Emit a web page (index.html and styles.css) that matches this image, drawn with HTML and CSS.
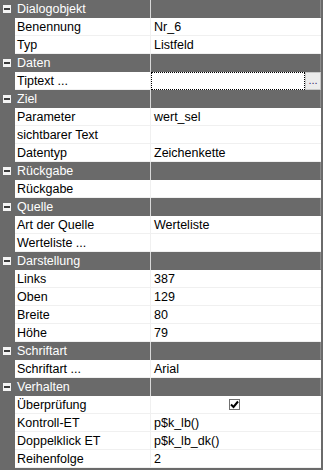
FILE: index.html
```html
<!DOCTYPE html>
<html>
<head>
<meta charset="utf-8">
<link rel="stylesheet" href="styles.css">
</head>
<body>
<div class="grid">
  <div class="row cat"><span class="tg"><i class="box"></i></span><span class="nm">Dialogobjekt</span><span class="dv"></span><span class="vl"></span></div>
  <div class="row"><span class="tg"></span><span class="nm">Benennung</span><span class="dv"></span><span class="vl">Nr_6</span></div>
  <div class="row"><span class="tg"></span><span class="nm">Typ</span><span class="dv"></span><span class="vl">Listfeld</span></div>
  <div class="row cat"><span class="tg"><i class="box"></i></span><span class="nm">Daten</span><span class="dv"></span><span class="vl"></span></div>
  <div class="row"><span class="tg"></span><span class="nm">Tiptext ...</span><span class="dv"></span><span class="vl edit"><span class="field"></span><span class="btn">...</span></span></div>
  <div class="row cat"><span class="tg"><i class="box"></i></span><span class="nm">Ziel</span><span class="dv"></span><span class="vl"></span></div>
  <div class="row"><span class="tg"></span><span class="nm">Parameter</span><span class="dv"></span><span class="vl">wert_sel</span></div>
  <div class="row"><span class="tg"></span><span class="nm">sichtbarer Text</span><span class="dv"></span><span class="vl"></span></div>
  <div class="row"><span class="tg"></span><span class="nm">Datentyp</span><span class="dv"></span><span class="vl">Zeichenkette</span></div>
  <div class="row cat"><span class="tg"><i class="box"></i></span><span class="nm">Rückgabe</span><span class="dv"></span><span class="vl"></span></div>
  <div class="row"><span class="tg"></span><span class="nm">Rückgabe</span><span class="dv"></span><span class="vl"></span></div>
  <div class="row cat"><span class="tg"><i class="box"></i></span><span class="nm">Quelle</span><span class="dv"></span><span class="vl"></span></div>
  <div class="row"><span class="tg"></span><span class="nm">Art der Quelle</span><span class="dv"></span><span class="vl">Werteliste</span></div>
  <div class="row"><span class="tg"></span><span class="nm">Werteliste ...</span><span class="dv"></span><span class="vl"></span></div>
  <div class="row cat"><span class="tg"><i class="box"></i></span><span class="nm">Darstellung</span><span class="dv"></span><span class="vl"></span></div>
  <div class="row"><span class="tg"></span><span class="nm">Links</span><span class="dv"></span><span class="vl">387</span></div>
  <div class="row"><span class="tg"></span><span class="nm">Oben</span><span class="dv"></span><span class="vl">129</span></div>
  <div class="row"><span class="tg"></span><span class="nm">Breite</span><span class="dv"></span><span class="vl">80</span></div>
  <div class="row"><span class="tg"></span><span class="nm">Höhe</span><span class="dv"></span><span class="vl">79</span></div>
  <div class="row cat"><span class="tg"><i class="box"></i></span><span class="nm">Schriftart</span><span class="dv"></span><span class="vl"></span></div>
  <div class="row"><span class="tg"></span><span class="nm">Schriftart ...</span><span class="dv"></span><span class="vl">Arial</span></div>
  <div class="row cat"><span class="tg"><i class="box"></i></span><span class="nm">Verhalten</span><span class="dv"></span><span class="vl"></span></div>
  <div class="row"><span class="tg"></span><span class="nm">Überprüfung</span><span class="dv"></span><span class="vl center"><span class="chk"><svg width="9" height="9" viewBox="0 0 9 9"><path d="M1 4.5 L3.5 7 L8 1.5" fill="none" stroke="#000" stroke-width="2"/></svg></span></span></div>
  <div class="row"><span class="tg"></span><span class="nm">Kontroll-ET</span><span class="dv"></span><span class="vl">p$k_lb()</span></div>
  <div class="row"><span class="tg"></span><span class="nm">Doppelklick ET</span><span class="dv"></span><span class="vl">p$k_lb_dk()</span></div>
  <div class="row"><span class="tg"></span><span class="nm">Reihenfolge</span><span class="dv"></span><span class="vl">2</span></div>
</div>
</body>
</html>
```
FILE: styles.css
```css
html, body {
  margin: 0;
  padding: 0;
  background: #6a6a6a;
}
.grid {
  width: 323px;
  height: 470px;
  background: #6a6a6a;
  font-family: "Liberation Sans", Arial, sans-serif;
  font-size: 12.5px;
  color: #000;
  overflow: hidden;
}
.row {
  display: grid;
  grid-template-columns: 15px 135px 1px 170px 2px;
  height: 18px;
}
.row > span {
  display: flex;
  align-items: center;
  height: 17px;
  box-sizing: border-box;
}
.row .nm, .row .vl {
  background: #fff;
  border-bottom: 1px solid #f0f0f0;
  height: 18px;
  white-space: nowrap;
  overflow: hidden;
}
.row .dv {
  background: #f0f0f0;
  height: 18px;
}
.row .tg {
  background: #6a6a6a;
  height: 18px;
}
.nm {
  padding-left: 2px;
}
.vl {
  padding-left: 3px;
}
.cat .nm, .cat .vl {
  background: #6a6a6a;
  color: #fff;
  border-bottom: 1px solid #6a6a6a;
}
.cat .dv {
  background: #d8d8d8;
}
.cat .vl {
  border-right: 1px solid #8c8c8c;
}
.tg {
  position: relative;
}
.box {
  position: absolute;
  left: 3px;
  top: 5px;
  width: 8px;
  height: 8px;
  background: #f4f4f4;
}
.box::after {
  content: "";
  position: absolute;
  left: 1px;
  top: 3px;
  width: 6px;
  height: 2px;
  background: #3c3c3c;
}
.vl.edit {
  padding-left: 0;
  border-bottom: none;
  align-items: stretch;
}
.field {
  flex: 1;
  border: 1px dotted #000;
}
.btn {
  width: 16px;
  background: #ececec;
  border: 1px solid #c8c8c8;
  box-sizing: border-box;
  color: #3a2a6a;
  font-size: 11px;
  display: flex;
  align-items: center;
  justify-content: center;
  line-height: 1;
  padding-bottom: 2px;
}
.vl.center {
  justify-content: center;
  padding-left: 0;
  padding-right: 3px;
}
.chk {
  width: 11px;
  height: 11px;
  box-sizing: border-box;
  border: 1px solid #707070;
  background: #fff;
  display: flex;
  align-items: center;
  justify-content: center;
}
.chk svg {
  display: block;
}
```
